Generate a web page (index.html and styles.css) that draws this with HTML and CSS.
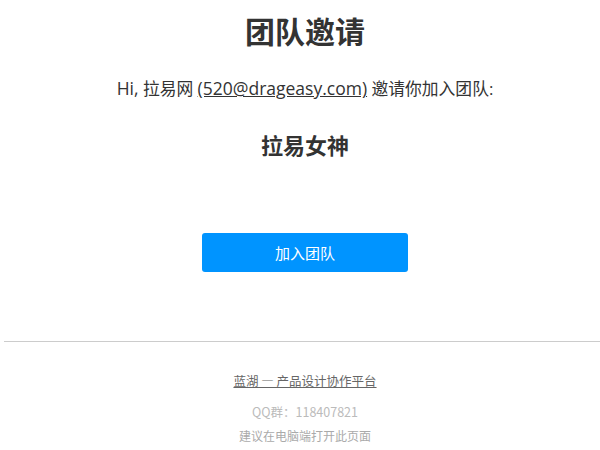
FILE: index.html
```html
<!DOCTYPE html>
<html lang="zh">
<head>
<meta charset="utf-8">
<link rel="stylesheet" href="styles.css">
</head>
<body>
<div class="page">
  <h1 class="title">团队邀请</h1>
  <p class="invite"><span class="lat">Hi,</span> 拉易网 <a class="mail lat" href="#">(520@drageasy.com)</a> 邀请你加入团队:</p>
  <h2 class="team">拉易女神</h2>
  <div class="action"><a class="btn" href="#">加入团队</a></div>
  <div class="footer">
    <a class="brand" href="#">蓝湖 — 产品设计协作平台</a>
    <p class="qq">QQ群：118407821</p>
    <p class="tip">建议在电脑端打开此页面</p>
  </div>
</div>
</body>
</html>
```
FILE: styles.css
```css
html, body {
  margin: 0;
  padding: 0;
  overflow: hidden;
  background: #fff;
}
body {
  font-family: "Noto Sans CJK SC", "Open Sans", sans-serif;
  color: #333;
}
.page {
  margin-left: 4px;
  width: 602px;
  text-align: center;
}
.title {
  margin: 0;
  padding-top: 8px;
  font-size: 30px;
  line-height: 44px;
  font-weight: 700;
  color: #333;
}
.invite {
  margin: 24px 0 0;
  font-family: "Open Sans", "Noto Sans CJK SC", sans-serif;
  font-size: 16.8px;
  line-height: 24px;
  color: #333;
}
.lat {
  font-size: 17.5px;
}
.mail {
  color: #333;
  text-decoration: underline;
}
.team {
  margin: 27px 0 0;
  font-size: 22px;
  line-height: 32px;
  font-weight: 700;
  color: #333;
}
.action {
  padding-top: 73px;
  padding-bottom: 69px;
  border-bottom: 1px solid #ccc;
}
.btn {
  display: inline-block;
  width: 206px;
  height: 39px;
  line-height: 39px;
  background: #0094ff;
  color: #fff;
  border-radius: 3px;
  font-size: 15px;
  text-decoration: none;
}
.footer {
  padding-top: 29px;
  font-size: 12px;
}
.brand {
  color: #666;
  font-size: 12.5px;
  text-decoration: underline;
  line-height: 20px;
}
.qq {
  margin: 11px 0 0;
  color: #bbb;
  font-size: 12.5px;
  line-height: 20px;
}
.tip {
  margin: 4px 0 0;
  color: #aaa;
  line-height: 20px;
}
```
